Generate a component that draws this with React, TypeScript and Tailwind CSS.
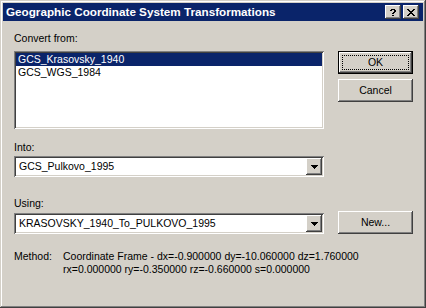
import React from 'react';

const sunken =
  'shadow-[inset_1px_1px_0_#808080,inset_-1px_-1px_0_#ffffff,inset_2px_2px_0_#404040,inset_-2px_-2px_0_#d4d0c8]';
const raised =
  'shadow-[inset_-1px_-1px_0_#404040,inset_1px_1px_0_#ffffff,inset_-2px_-2px_0_#808080,inset_2px_2px_0_#d4d0c8]';

const HelpGlyph = () => (
  <svg width="6" height="7" viewBox="0 0 6 7" shapeRendering="crispEdges">
    <rect x="1" y="0" width="4" height="1" fill="#000" />
    <rect x="0" y="1" width="2" height="1" fill="#000" />
    <rect x="4" y="1" width="2" height="2" fill="#000" />
    <rect x="3" y="3" width="2" height="1" fill="#000" />
    <rect x="2" y="4" width="2" height="1" fill="#000" />
    <rect x="2" y="6" width="2" height="1" fill="#000" />
  </svg>
);

const CloseGlyph = () => (
  <svg width="8" height="7" viewBox="0 0 8 7" shapeRendering="crispEdges">
    <rect x="0" y="0" width="2" height="1" fill="#000" />
    <rect x="6" y="0" width="2" height="1" fill="#000" />
    <rect x="1" y="1" width="2" height="1" fill="#000" />
    <rect x="5" y="1" width="2" height="1" fill="#000" />
    <rect x="2" y="2" width="4" height="1" fill="#000" />
    <rect x="3" y="3" width="2" height="1" fill="#000" />
    <rect x="2" y="4" width="4" height="1" fill="#000" />
    <rect x="1" y="5" width="2" height="1" fill="#000" />
    <rect x="5" y="5" width="2" height="1" fill="#000" />
    <rect x="0" y="6" width="2" height="1" fill="#000" />
    <rect x="6" y="6" width="2" height="1" fill="#000" />
  </svg>
);

const Arrow = () => (
  <svg width="7" height="4" viewBox="0 0 7 4" shapeRendering="crispEdges">
    <rect x="0" y="0" width="7" height="1" fill="#000" />
    <rect x="1" y="1" width="5" height="1" fill="#000" />
    <rect x="2" y="2" width="3" height="1" fill="#000" />
    <rect x="3" y="3" width="1" height="1" fill="#000" />
  </svg>
);

const Combo = ({ value }: { value: string }) => (
  <div className={`h-[21px] w-[310px] bg-white p-[2px] flex ${sunken}`}>
    <div className="flex-1 flex items-center pl-[3px] leading-[13px] whitespace-nowrap overflow-hidden">
      {value}
    </div>
    <div className={`w-[16px] h-[17px] bg-[#d4d0c8] flex items-center justify-center pt-[1px] ${raised}`}>
      <Arrow />
    </div>
  </div>
);

const Button = ({ label, className = '' }: { label: string; className?: string }) => (
  <div
    className={`w-[75px] h-[23px] bg-[#d4d0c8] flex items-center justify-center leading-[13px] ${raised} ${className}`}
  >
    {label}
  </div>
);

export default function App() {
  return (
    <div
      className={`w-[426px] h-[308px] bg-[#d4d0c8] p-[3px] flex flex-col text-black text-[10.5px] font-['Liberation_Sans',Arial,sans-serif] shadow-[inset_-1px_-1px_0_#404040,inset_1px_1px_0_#d4d0c8,inset_-2px_-2px_0_#808080,inset_2px_2px_0_#ffffff]`}
    >
      {/* Title bar */}
      <div className="h-[18px] bg-[#0a246a] flex items-center pl-[3px] pr-[4px]">
        <span className="flex-1 text-white font-bold text-[11.7px] leading-[18px] whitespace-nowrap">
          Geographic Coordinate System Transformations
        </span>
        <div className={`w-[16px] h-[14px] bg-[#d4d0c8] flex items-center justify-center ${raised}`}>
          <HelpGlyph />
        </div>
        <div className={`ml-[2px] w-[16px] h-[14px] bg-[#d4d0c8] flex items-center justify-center ${raised}`}>
          <CloseGlyph />
        </div>
      </div>

      {/* Body */}
      <div className="flex-1 flex flex-col pl-[11px]">
        <div className="flex mt-[11px]">
          <div className="w-[310px] flex flex-col">
            <div className="leading-[13px]">Convert from:</div>
            <div className={`mt-[6px] h-[78px] bg-white p-[2px] flex flex-col ${sunken}`}>
              <div className="h-[13px] leading-[13px] pl-[2px] bg-[#0a246a] text-white">GCS_Krasovsky_1940</div>
              <div className="h-[13px] leading-[13px] pl-[2px]">GCS_WGS_1984</div>
            </div>
          </div>
          <div className="ml-[14px] flex flex-col pt-[19px]">
            <div className="w-[75px] h-[23px] bg-black p-[1px]">
              <div className={`w-full h-full bg-[#d4d0c8] p-[3px] ${raised}`}>
                <div className="w-full h-full border border-dotted border-black flex items-center justify-center leading-[13px]">
                  OK
                </div>
              </div>
            </div>
            <Button label="Cancel" className="mt-[5px]" />
          </div>
        </div>

        <div className="mt-[12px] leading-[13px]">Into:</div>
        <div className="mt-[2px]">
          <Combo value="GCS_Pulkovo_1995" />
        </div>

        <div className="mt-[20px] leading-[13px]">Using:</div>
        <div className="mt-[1px] flex items-end">
          <Combo value="KRASOVSKY_1940_To_PULKOVO_1995" />
          <Button label="New..." className="ml-[14px]" />
        </div>

        <div className="mt-[16px] flex leading-[13px]">
          <div className="w-[49px]">Method:</div>
          <div>
            <div>Coordinate Frame - dx=-0.900000 dy=-10.060000 dz=1.760000</div>
            <div>rx=0.000000 ry=-0.350000 rz=-0.660000 s=0.000000</div>
          </div>
        </div>
      </div>
    </div>
  );
}
